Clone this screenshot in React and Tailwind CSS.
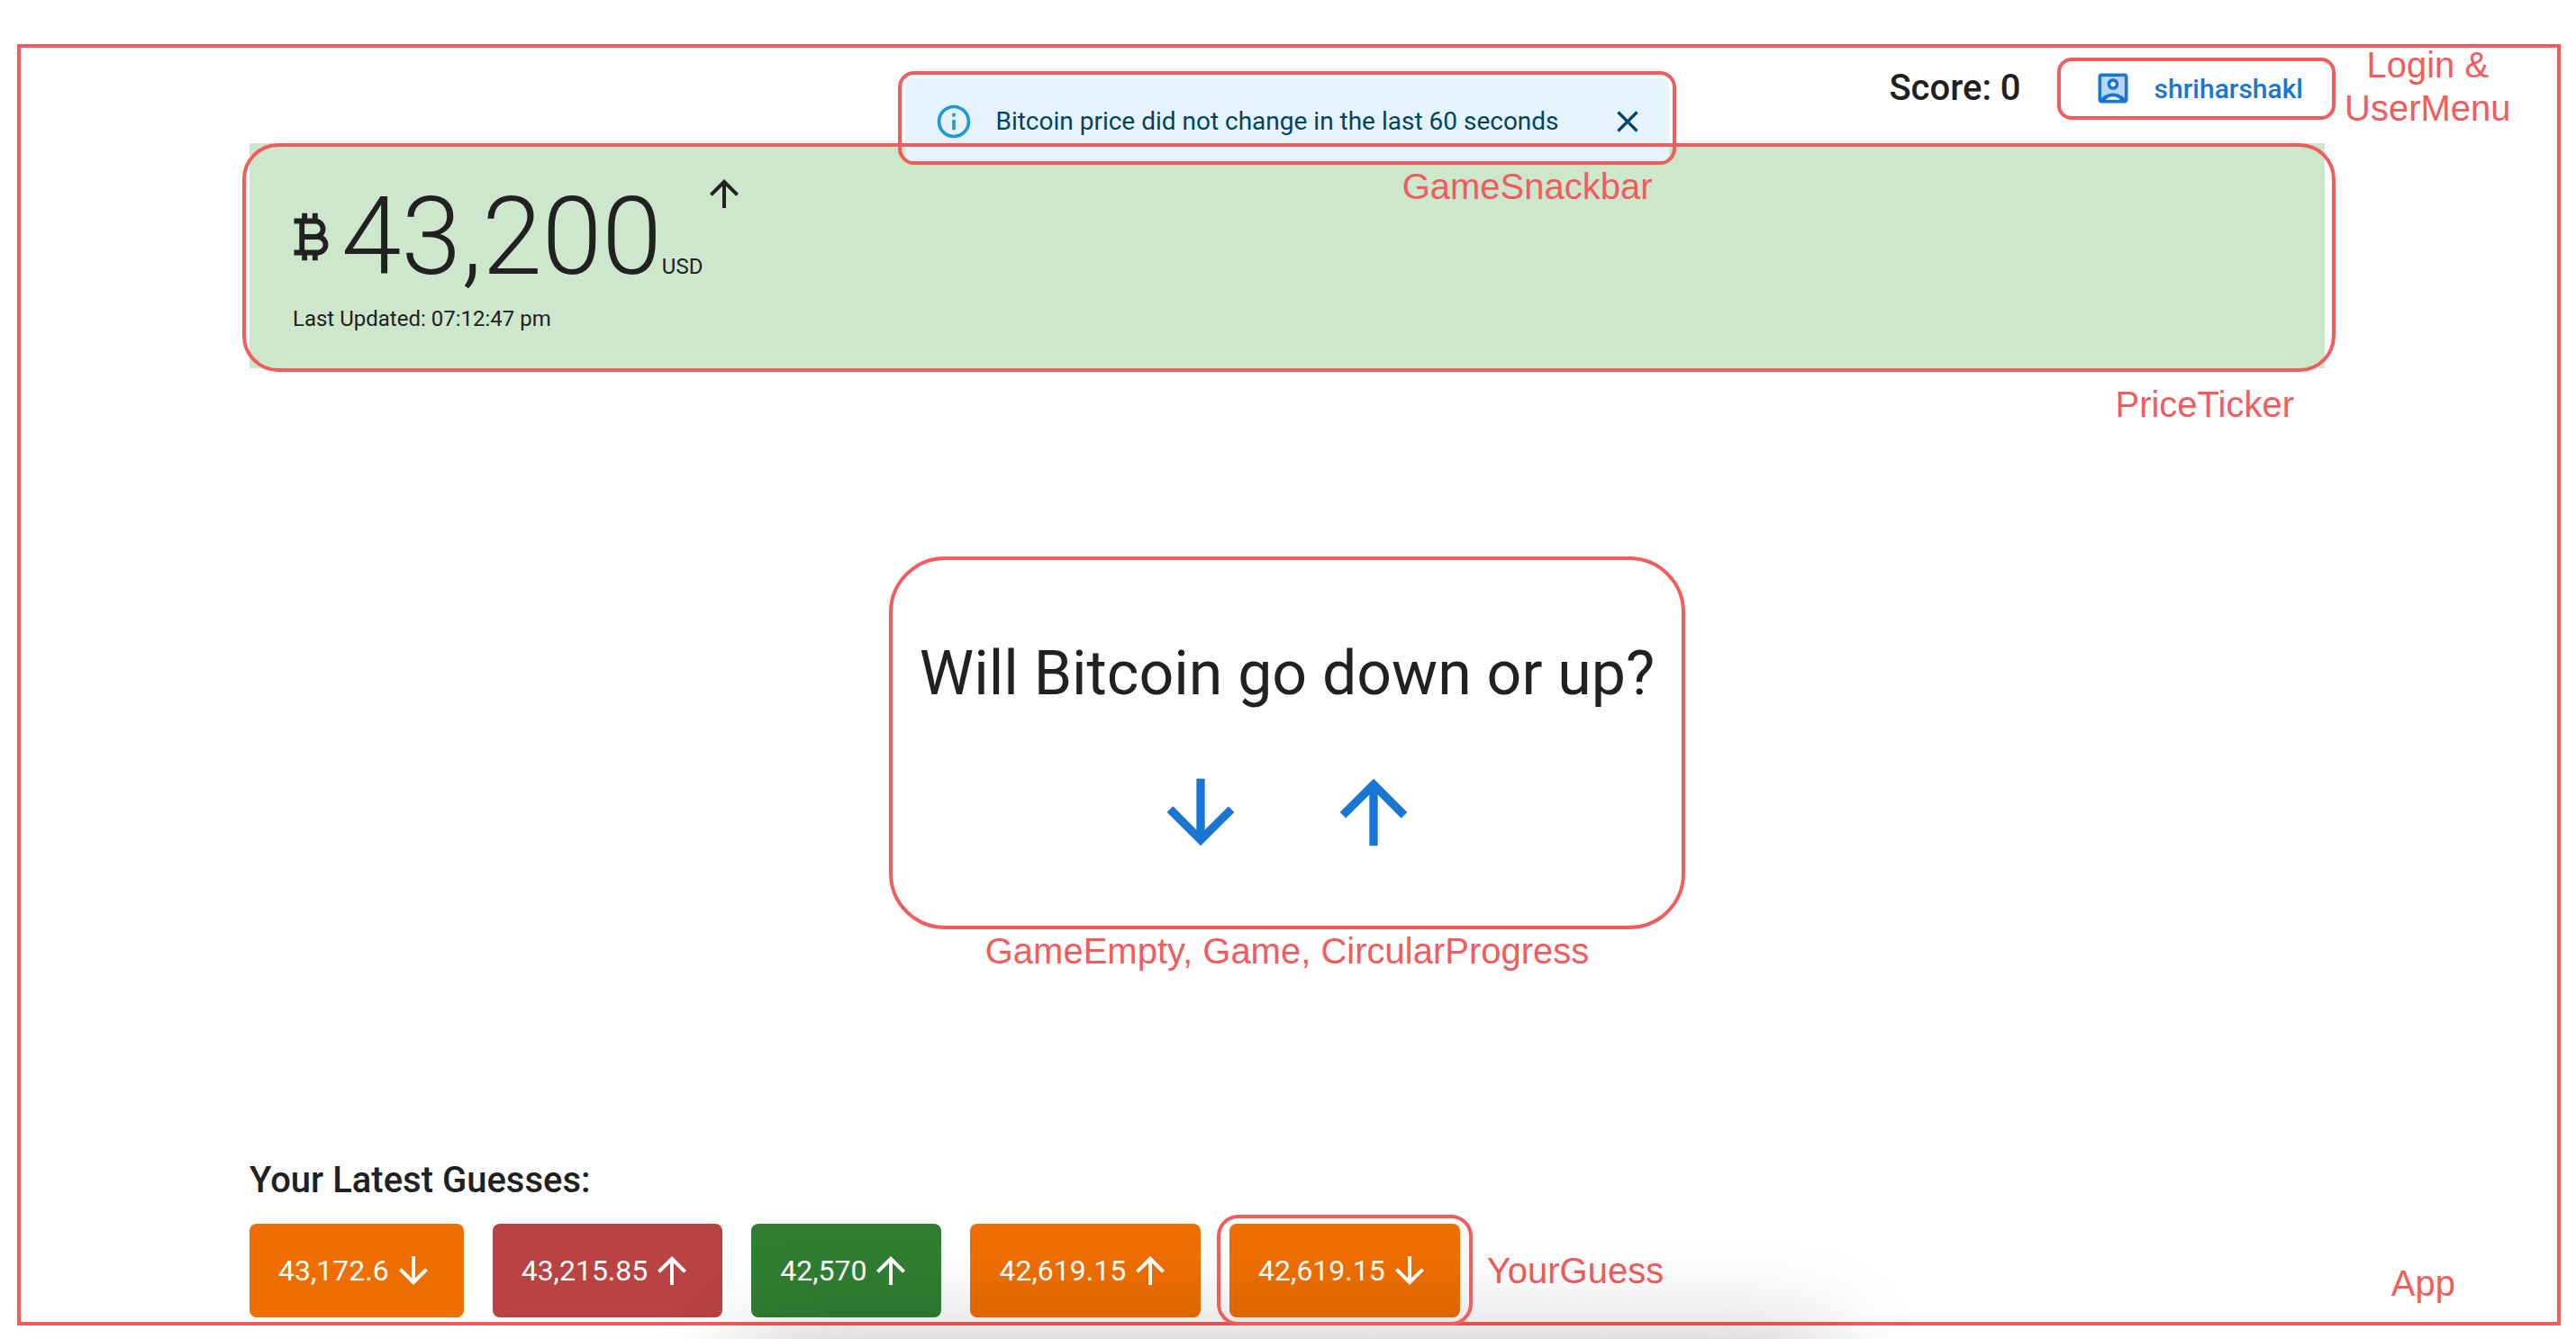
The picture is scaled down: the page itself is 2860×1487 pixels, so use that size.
const FRAME = "border-4 border-[#f25c5c]";
const NOTE = "font-['Liberation_Sans',Arial,sans-serif] text-[40px] leading-[48px] font-normal text-[#f25c5c] whitespace-nowrap";

const PATHS = {
  up: "M4 12l1.41 1.41L11 7.83V20h2V7.83l5.58 5.59L20 12l-8-8-8 8z",
  down: "M20 12l-1.41-1.41L13 16.17V4h-2v12.17l-5.58-5.59L4 12l8 8 8-8z",
  close: "M19 6.41L17.59 5 12 10.59 6.41 5 5 6.41 10.59 12 5 17.59 6.41 19 12 13.41 17.59 19 19 17.59 13.41 12z",
  info: "M11 7h2v2h-2V7zm0 4h2v6h-2v-6zm1-9C6.48 2 2 6.48 2 12s4.48 10 10 10 10-4.48 10-10S17.52 2 12 2zm0 18c-4.41 0-8-3.59-8-8s3.59-8 8-8 8 3.59 8 8-3.59 8-8 8z",
  bitcoin:
    "M17.06 11.57c.59-.69.94-1.59.94-2.57 0-1.86-1.27-3.43-3-3.87V3h-2v2h-2V3H9v2H6v2h2v10H6v2h3v2h2v-2h2v2h2v-2c2.21 0 4-1.79 4-4 0-1.45-.78-2.73-1.94-3.43zM10 7h4c1.1 0 2 .9 2 2s-.9 2-2 2h-4V7zm5 10h-5v-4h5c1.1 0 2 .9 2 2s-.9 2-2 2z",
};

function Icon({ name, className }) {
  return (
    <svg viewBox="0 0 24 24" fill="currentColor" aria-hidden="true" className={className}>
      <path d={PATHS[name]} />
    </svg>
  );
}

function AccountIcon() {
  return (
    <svg viewBox="0 0 24 24" fill="currentColor" aria-hidden="true" className="size-11">
      <path
        opacity="0.3"
        d="M5 5v12.85C6.81 16.1 9.29 15 12 15s5.19 1.1 7 2.85V5H5zm7 8c-1.93 0-3.5-1.57-3.5-3.5S10.07 6 12 6s3.5 1.57 3.5 3.5S13.93 13 12 13z"
      />
      <path d="M19 3H5c-1.1 0-2 .9-2 2v14c0 1.1.9 2 2 2h14c1.1 0 2-.9 2-2V5c0-1.1-.9-2-2-2zM7.5 19c1.1-1.24 2.7-2 4.5-2s3.4.76 4.5 2h-9zM19 17.85C17.19 16.1 14.71 15 12 15s-5.19 1.1-7 2.85V5h14v12.85z" />
      <path d="M12 13c1.93 0 3.5-1.57 3.5-3.5S13.93 6 12 6 8.5 7.57 8.5 9.5 10.07 13 12 13zm0-5c.83 0 1.5.67 1.5 1.5S12.83 11 12 11s-1.5-.67-1.5-1.5S11.17 8 12 8z" />
    </svg>
  );
}

function GameSnackbar() {
  return (
    <div className="absolute right-1 left-0 top-[26px] z-10 flex justify-center">
      <div className="relative">
        <div role="alert" className={"rounded-[18px] px-1 pt-1 " + FRAME}>
          <div className="flex h-[92px] items-center rounded-lg bg-[#e5f4fc] pt-1 pr-[26px] pl-8 text-[#014361]">
            <Icon name="info" className="size-11 text-[#2196dc]" />
            <span className="ml-6 text-[28px] leading-10 whitespace-nowrap">
              Bitcoin price did not change in the last 60 seconds
            </span>
            <button type="button" aria-label="Close" className="ml-14 cursor-pointer">
              <Icon name="close" className="size-10" />
            </button>
          </div>
        </div>
        <span className={"absolute right-[26px] top-full " + NOTE}>GameSnackbar</span>
      </div>
    </div>
  );
}

function Header() {
  return (
    <header className="relative flex h-[106px] items-center justify-end pb-4 font-medium">
      <h2 className="mr-10 text-[40px] leading-[64px]">Score: 0</h2>
      <div className={"-mr-3 rounded-2xl " + FRAME}>
        <button type="button" className="flex h-[61px] cursor-pointer items-center gap-6 pr-8 pl-9 text-[30px] text-[#1976d2]">
          <AccountIcon />
          shriharshakl
        </button>
      </div>
      <div className={"absolute left-full ml-[22px] pb-1 text-center " + NOTE}>
        Login &amp;
        <br />
        UserMenu
      </div>
    </header>
  );
}

function PriceTicker() {
  return (
    <section className="relative h-[250px] bg-[#cde7cd] pl-8">
      <div className="flex pt-8">
        <Icon name="bitcoin" className="mt-[37px] size-[70px]" />
        <div className="flex items-baseline">
          <span className="text-[120px] leading-[144px] font-light">43,200</span>
          <span className="text-2xl">USD</span>
        </div>
        <Icon name="up" className="size-12" />
      </div>
      <p className="ml-4 text-2xl leading-[38px]">Last Updated: 07:12:47 pm</p>
      <div className={"pointer-events-none absolute -left-2 -right-3 top-0 -bottom-1 z-20 rounded-[40px] " + FRAME} />
      <span className={"absolute right-[34px] top-full mt-4 " + NOTE}>PriceTicker</span>
    </section>
  );
}

function Game() {
  return (
    <section className="flex flex-col items-center pt-2.5">
      <div className={"flex flex-col items-center rounded-[62px] px-[30px] pt-[84px] pb-[70px] " + FRAME}>
        <h1 className="text-[68px] leading-[84px] whitespace-nowrap">Will Bitcoin go down or up?</h1>
        <div className="mt-14 flex gap-20 text-[#1976d2]">
          <button type="button" aria-label="Down" className="cursor-pointer">
            <Icon name="down" className="size-28" />
          </button>
          <button type="button" aria-label="Up" className="cursor-pointer">
            <Icon name="up" className="size-28" />
          </button>
        </div>
      </div>
      <span className={NOTE}>GameEmpty, Game, CircularProgress</span>
    </section>
  );
}

const GUESSES = [
  { price: "43,172.6", dir: "down", color: "bg-[#ee6e00]" },
  { price: "43,215.85", dir: "up", color: "bg-[#b94242]" },
  { price: "42,570", dir: "up", color: "bg-[#2f7e32]" },
  { price: "42,619.15", dir: "up", color: "bg-[#ee6e00]" },
  { price: "42,619.15", dir: "down", color: "bg-[#ee6e00]", noted: true },
];

function YourGuess({ price, dir, color, noted }) {
  return (
    <li className={"relative flex h-[104px] items-center gap-[3px] rounded-lg px-8 text-[32px] text-white " + color}>
      {price}
      <Icon name={dir} className="size-12" />
      {noted && (
        <>
          <div className={"absolute -inset-x-[14px] -top-2.5 -bottom-[9px] z-20 rounded-3xl " + FRAME} />
          <span className={"absolute left-full ml-[30px] " + NOTE}>YourGuess</span>
        </>
      )}
    </li>
  );
}

export default function App() {
  return (
    <div className="relative flex min-h-screen flex-col overflow-hidden bg-white pt-[49px] pr-[17px] pb-[15px] pl-[19px] font-[Roboto,sans-serif] text-[#212121]">
      <div className={"relative flex grow flex-col pr-1 " + FRAME}>
        <GameSnackbar />
        <main className="mx-auto flex w-full max-w-[2304px] grow flex-col">
          <Header />
          <PriceTicker />
          <div className="flex grow flex-col justify-center">
            <Game />
          </div>
          <h2 className="text-[40px] leading-[64px] font-medium">Your Latest Guesses:</h2>
          <ul className="mt-4 mb-[5px] flex gap-8">
            {GUESSES.map((g, i) => (
              <YourGuess key={i} {...g} />
            ))}
          </ul>
        </main>
        <span className={"absolute right-[113px] bottom-[19px] " + NOTE}>App</span>
      </div>
      <div className="pointer-events-none absolute inset-x-[29%] top-full h-40 shadow-[0_0_110px_0_rgba(0,0,0,0.24)]" />
    </div>
  );
}
